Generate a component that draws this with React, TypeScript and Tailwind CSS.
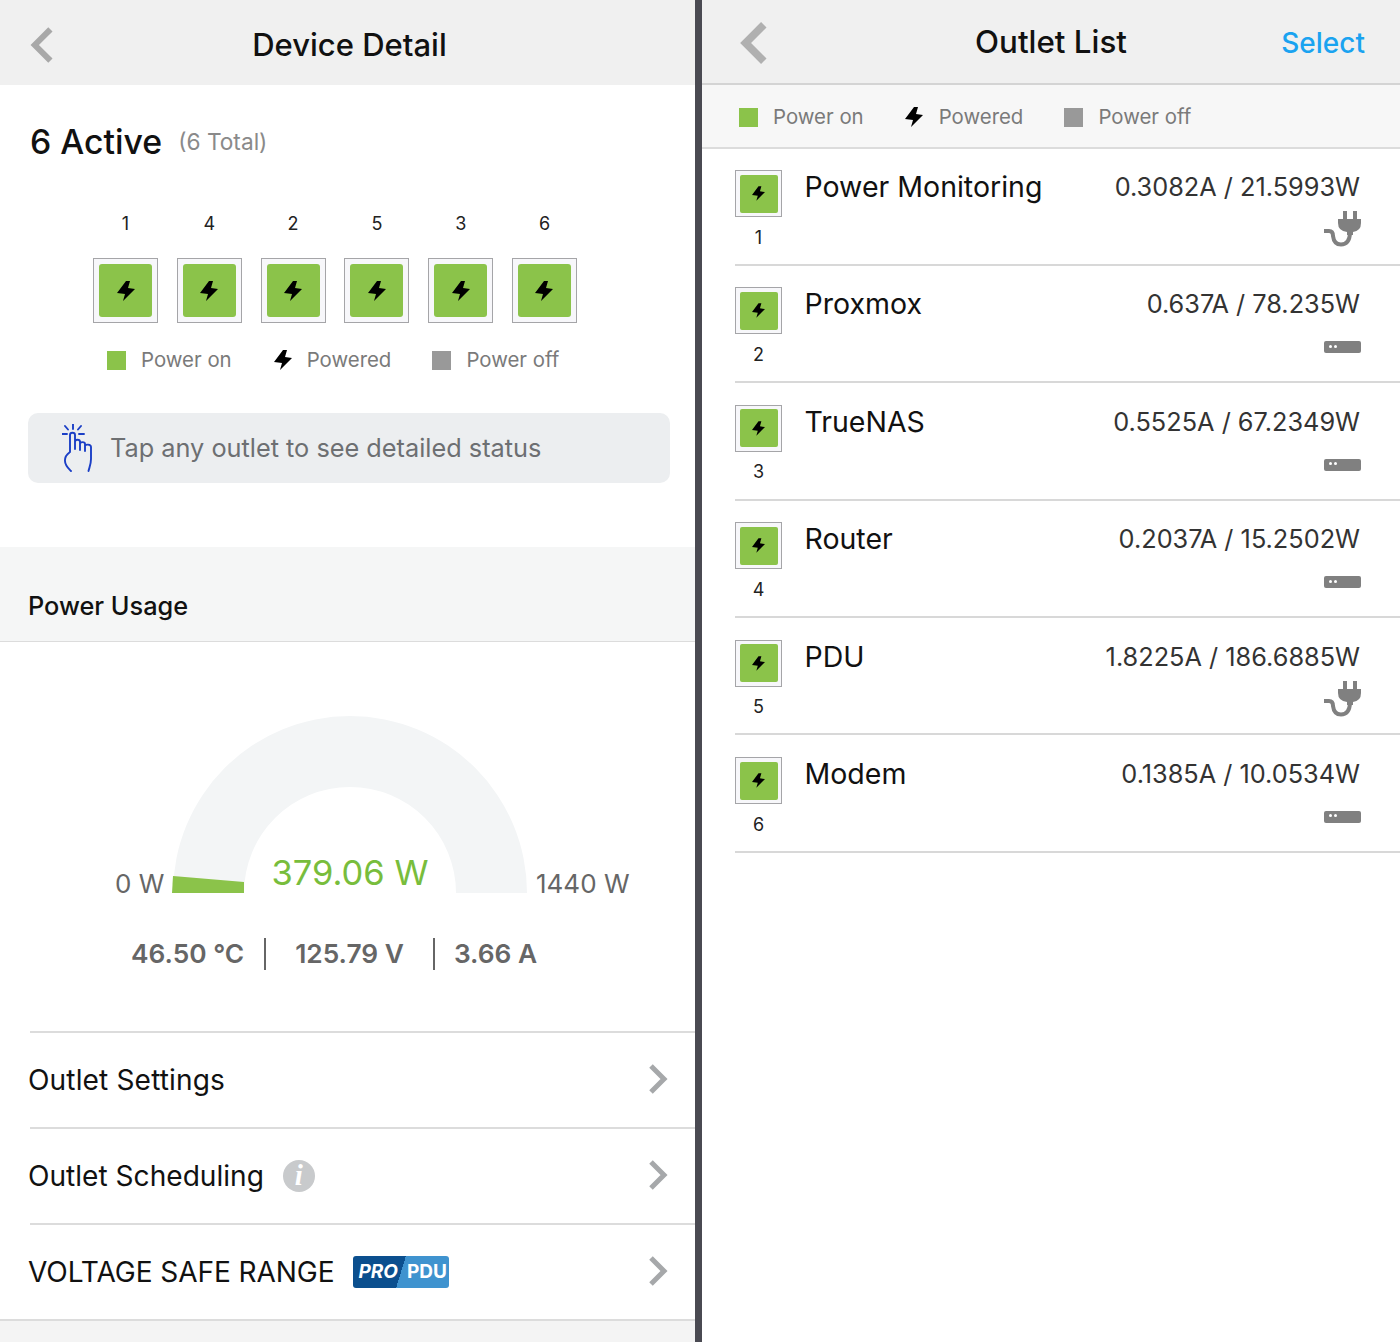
import React from "react";

const Bolt = ({ className }: { className: string }) => (
  <svg viewBox="0 0 18 20" className={className} fill="currentColor">
    <path d="M9 0 L13 0 L11 7 L18 8 L6 20 L8 13 L0 12 Z" />
  </svg>
);

const Chevron = ({ dir, className, sw }: { dir: "l" | "r"; className: string; sw: number }) => (
  <svg viewBox="0 0 20 30" className={className} fill="none" stroke="currentColor" strokeWidth={sw}>
    <path d={dir === "l" ? "M17 2 L4 15 L17 28" : "M3 2 L16 15 L3 28"} />
  </svg>
);

const Plug = () => (
  <svg viewBox="0 0 38 37" className="h-[37px] w-[38px] text-[#808080]" fill="currentColor">
    <rect x="20" y="0" width="4" height="9" />
    <rect x="30" y="0" width="4" height="9" />
    <path d="M15 8 H38 V12 Q38 20 30 21 V24 H24 V21 Q15 20 15 12 Z" />
    <path d="M1 20 H6 Q10 20 10 25 Q11 33.5 18 33.5 Q26.5 33.5 27 22" fill="none" stroke="currentColor" strokeWidth="4" />
  </svg>
);

const Server = () => (
  <div className="flex h-[12px] w-[37px] items-center gap-[2px] rounded-[2px] bg-[#808080] pb-[2px] pl-[5px]">
    <span className="h-[3px] w-[3px] rounded-full bg-white" />
    <span className="h-[3px] w-[3px] rounded-full bg-white" />
  </div>
);

const Hand = () => (
  <svg viewBox="0 0 32 48" className="h-[48px] w-[32px] text-[#1b3fc6]" fill="none" stroke="currentColor" strokeWidth="1.9" strokeLinecap="round" strokeLinejoin="round">
    <path d="M11 0 V5 M3 2 L6 5.5 M19 2 L16 5.5 M0 10 H5 M17 10 H22" />
    <path d="M9 47 C6 44 2.5 41 3 36 C3 31.5 6 29.5 8 28 V11 C8 8 13 8 13 11 V25 M13 18 C13 15 18 15 18 18 V26 M18 20 C18 17.5 23 17.5 23 20 V27 M23 22 C23 20 29 20 29 23 V35 C29 40 27.5 43 26.5 47" />
  </svg>
);

const LegendItems = ({ gaps }: { gaps: string[] }) => (
  <>
    <span className="h-[19px] w-[19px] bg-[#8bc34a]" />
    <span className={gaps[0]}>Power on</span>
    <Bolt className={`h-[20px] w-[18px] text-black ${gaps[1]}`} />
    <span className={gaps[2]}>Powered</span>
    <span className={`h-[19px] w-[19px] bg-[#999999] ${gaps[3]}`} />
    <span className={gaps[4]}>Power off</span>
  </>
);

const topOrder = ["1", "4", "2", "5", "3", "6"];

const outlets = [
  { n: "1", name: "Power Monitoring", val: "0.3082A / 21.5993W", plug: true },
  { n: "2", name: "Proxmox", val: "0.637A / 78.235W", plug: false },
  { n: "3", name: "TrueNAS", val: "0.5525A / 67.2349W", plug: false },
  { n: "4", name: "Router", val: "0.2037A / 15.2502W", plug: false },
  { n: "5", name: "PDU", val: "1.8225A / 186.6885W", plug: true },
  { n: "6", name: "Modem", val: "0.1385A / 10.0534W", plug: false },
];

const MenuRow = ({ children }: { children: React.ReactNode }) => (
  <div className="ml-[30px] flex h-[96px] items-center justify-between border-t-2 border-[#dcdcdc] pr-[27px]">
    <div className="-ml-[2px] flex items-center text-[28.1px] text-[#111]">{children}</div>
    <Chevron dir="r" sw={5} className="-mt-[2px] h-[30px] w-[20px] text-[#a6a8aa]" />
  </div>
);

export default function App() {
  return (
    <div className="flex h-[1342px] w-[1400px] overflow-hidden bg-white [font-family:Inter,sans-serif]">
      {/* Left panel */}
      <div className="flex w-[695px] flex-col">
        <div className="grid h-[85px] grid-cols-[1fr_auto_1fr] items-center bg-[#f0f0f0] pt-[5px]">
          <Chevron dir="l" sw={5} className="ml-[30px] h-[36px] w-[24px] text-[#a8a8a8]" />
          <div className="ml-[4px] text-[31px] font-medium text-[#111]">Device Detail</div>
          <div />
        </div>

        <div className="h-[462px] pt-[37px]">
          <div className="flex h-[40px] items-center pl-[30px]">
            <span className="text-[33.8px] font-medium text-[#111]">6 Active</span>
            <span className="ml-[16px] text-[22.7px] text-[#8a8a8a]">(6 Total)</span>
          </div>

          <div className="ml-[93px] mt-[50px] flex gap-[18.8px]">
            {topOrder.map((n) => (
              <div key={n} className="flex w-[65px] flex-col items-center">
                <div className="h-[22px] pt-[1px] text-[18px] leading-[22px] text-[#222]">{n}</div>
                <div className="mt-[24px] flex h-[65px] w-[65px] items-center justify-center border border-[#a5a5a8] bg-[#f7f7fa]">
                  <div className="flex h-[53px] w-[53px] items-center justify-center rounded-[3px] bg-[#8bc34a]">
                    <Bolt className="h-[20px] w-[18px] text-black" />
                  </div>
                </div>
              </div>
            ))}
          </div>

          <div className="ml-[107px] mt-[26px] flex h-[22px] items-center text-[20.4px] text-[#7a7a7a]">
            <LegendItems gaps={["ml-[15px]", "ml-[42px]", "ml-[15px]", "ml-[41px]", "ml-[15px]"]} />
          </div>

          <div className="ml-[28px] mt-[42px] flex h-[70px] w-[642px] items-center rounded-[10px] bg-[#eceef0] pl-[34px]">
            <Hand />
            <span className="ml-[16px] text-[25.3px] text-[#6d6f72]">Tap any outlet to see detailed status</span>
          </div>
        </div>

        <div className="flex h-[95px] items-end border-b border-[#dcdcdc] bg-[#f5f6f6] pb-[19px] pl-[28px]">
          <span className="text-[25.3px] font-medium leading-[32px] text-[#111]">Power Usage</span>
        </div>

        <div className="h-[389px] pt-[74px]">
          <div className="ml-[115px] flex items-end">
            <span className="-mb-[6px] w-[57px] text-[26px] leading-[32px] text-[#666]">0 W</span>
            <div className="relative h-[178px] w-[356px]">
              <svg viewBox="0 0 356 178" className="h-[178px] w-[356px]">
                <path d="M1 177 A177 177 0 0 1 355 177 H284 A106 106 0 0 0 72 177 Z" fill="#f3f5f6" />
                <path d="M0 177 L1 160 L72 166 L72 177 Z" fill="#8bc34a" />
              </svg>
              <span className="absolute bottom-[-1px] left-0 right-0 text-center text-[34.5px] leading-[44px] text-[#78bd3c]">379.06 W</span>
            </div>
            <span className="-mb-[6px] ml-[8px] text-[26px] leading-[32px] text-[#666]">1440 W</span>
          </div>

          <div className="ml-[131px] mt-[44px] flex h-[32px] items-center text-[26.3px] font-semibold text-[#666]">
            <span>46.50 °C</span>
            <span className="ml-[20px] h-[32px] border-l-2 border-[#666]" />
            <span className="ml-[29px]">125.79 V</span>
            <span className="ml-[29px] h-[32px] border-l-2 border-[#666]" />
            <span className="ml-[19px]">3.66 A</span>
          </div>
        </div>

        <MenuRow><span className="tracking-[0.13px]">Outlet Settings</span></MenuRow>
        <MenuRow>
          <span>Outlet Scheduling</span>
          <span className="ml-[19px] flex h-[32px] w-[32px] items-center justify-center rounded-full bg-[#c8cacc] text-[29px] font-bold italic text-white [font-family:'Liberation_Serif',serif]">
            i
          </span>
        </MenuRow>
        <MenuRow>
          <span className="tracking-[-0.1px]">VOLTAGE SAFE RANGE</span>
          <span className="ml-[19px] flex h-[32px] w-[96px] items-center rounded-[3px] bg-[linear-gradient(107deg,#0b4f8e_50%,#3f93cf_50%)] pl-[5px] text-[19px] font-bold text-white">
            <span className="italic">PRO</span>
            <span className="ml-[9px]">PDU</span>
          </span>
        </MenuRow>
        <div className="flex-1 border-t-2 border-[#dcdcdc] bg-[#f4f4f4]" />
      </div>

      {/* Divider */}
      <div className="w-[7px] bg-[#4a4a52]" />

      {/* Right panel */}
      <div className="flex flex-1 flex-col">
        <div className="grid h-[85px] grid-cols-[1fr_auto_1fr] items-center border-b-2 border-[#d4d4d4] bg-[#f0f0f0] pt-[2px]">
          <Chevron dir="l" sw={5.5} className="ml-[38px] h-[42px] w-[28px] text-[#b0b0b0]" />
          <div className="text-[31.3px] font-medium text-[#111]">Outlet List</div>
          <div className="pr-[35px] text-right text-[28px] font-medium text-[#1aa3f0]">Select</div>
        </div>

        <div className="flex h-[63.5px] items-center border-b-2 border-[#dcdcdc] bg-[#f7f7f7] pl-[37px] pt-[3px] text-[20.4px] text-[#7a7a7a]">
          <LegendItems gaps={["ml-[15px]", "ml-[41px]", "ml-[16px]", "ml-[41px]", "ml-[15px]"]} />
        </div>

        <div className="ml-[33px] flex flex-col">
          {outlets.map((o) => (
            <div key={o.n} className="flex h-[117.4px] border-b-2 border-[#d8d8d8] pr-[39px] pt-[21.6px]">
              <div className="flex w-[47px] flex-col items-center">
                <div className="flex h-[47px] w-[47px] items-center justify-center border border-[#a5a5a8] bg-[#f7f7fa]">
                  <div className="flex h-[38px] w-[38px] items-center justify-center rounded-[2px] bg-[#8bc34a]">
                    <Bolt className="h-[15px] w-[13px] text-black" />
                  </div>
                </div>
                <div className="mt-[9.5px] text-[18px] leading-[22px] text-[#222]">{o.n}</div>
              </div>
              <div className="ml-[22.5px] flex-1">
                <div className="-mt-[1px] text-[28.5px] leading-[36px] text-[#111]">{o.name}</div>
              </div>
              <div className="flex flex-col items-end">
                <div className="-mt-[1px] pr-[1px] text-[25.3px] leading-[36px] text-[#333]">{o.val}</div>
                <div className="mt-[6.4px] flex h-[37px] items-center">{o.plug ? <Plug /> : <Server />}</div>
              </div>
            </div>
          ))}
        </div>
      </div>
    </div>
  );
}
